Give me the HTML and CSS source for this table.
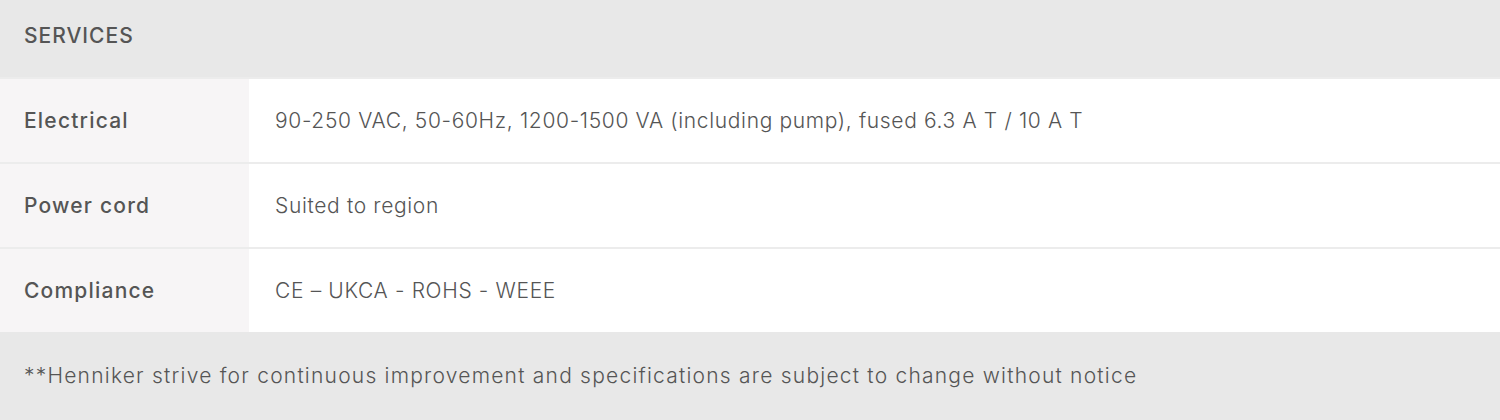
FILE: index.html
```html
<!DOCTYPE html>
<html><head><link rel="stylesheet" href="styles.css"></head>
<body>
<section class="specs">
  <div class="specs-head">SERVICES</div>
  <div class="spec-row">
    <div class="spec-label">Electrical</div>
    <div class="spec-value">90-250 VAC, 50-60Hz, 1200-1500 VA (including pump), fused 6.3 A T / 10 A T</div>
  </div>
  <div class="spec-row">
    <div class="spec-label">Power cord</div>
    <div class="spec-value">Suited to region</div>
  </div>
  <div class="spec-row">
    <div class="spec-label">Compliance</div>
    <div class="spec-value">CE – UKCA - ROHS - WEEE</div>
  </div>
  <div class="specs-foot">**Henniker strive for continuous improvement and specifications are subject to change without notice</div>
</section>
</body></html>
```
FILE: styles.css
```css
html,body{margin:0;padding:0;background:#fff;}
.specs{font-family:"Inter",sans-serif;color:#555;}
.specs-head{background:#e8e8e8;height:77px;display:flex;align-items:center;padding:0 24px 6px;box-sizing:border-box;font-size:21px;font-weight:500;letter-spacing:1px;}
.spec-row{display:grid;grid-template-columns:249px 1fr;border-top:2px solid #ececec;height:85px;box-sizing:border-box;}
.spec-label{background:#f7f5f6;display:flex;align-items:center;padding-left:24px;font-size:21px;font-weight:500;letter-spacing:1.2px;}
.spec-value{display:flex;align-items:center;padding-left:26px;font-size:21px;font-weight:300;letter-spacing:0.65px;}
.specs-foot{background:#e8e8e8;height:88px;display:flex;align-items:center;padding:0 24px 2px;box-sizing:border-box;font-size:21px;font-weight:300;letter-spacing:1.22px;}
```
